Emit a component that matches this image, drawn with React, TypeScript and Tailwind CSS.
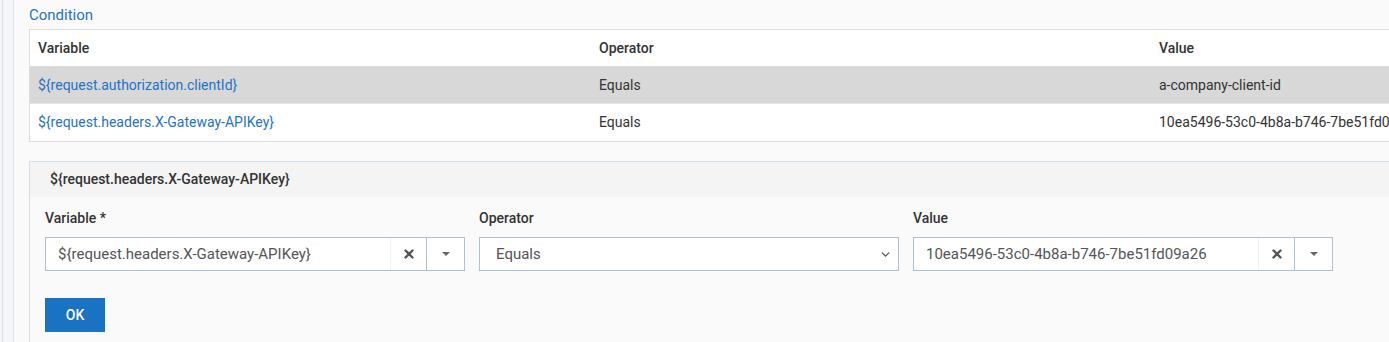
import { ChevronDown } from "lucide-react";

const rows = [
  { variable: "${request.authorization.clientId}", operator: "Equals", value: "a-company-client-id", selected: true },
  { variable: "${request.headers.X-Gateway-APIKey}", operator: "Equals", value: "10ea5496-53c0-4b8a-b746-7be51fd09a26", selected: false },
];

function ComboInput({ value }: { value: string }) {
  return (
    <div className="flex h-[34px] w-[420px] border border-[#aac0d4] bg-white">
      <div className="flex flex-1 items-center pl-[12px] text-[15px] text-[#555]">{value}</div>
      <div className="flex w-[36px] items-center justify-center border-l border-[#f2f2f2] text-[#555]">
        <svg width="10" height="10" viewBox="0 0 10 10">
          <path d="M1.5 1.5 L8.5 8.5 M8.5 1.5 L1.5 8.5" stroke="#555" strokeWidth="2.4" strokeLinecap="round" />
        </svg>
      </div>
      <div className="flex w-[38px] items-center justify-center border-l border-[#aac0d4]">
        <svg width="8" height="4" viewBox="0 0 8 4">
          <path d="M0 0 L8 0 L4 4 Z" fill="#666" />
        </svg>
      </div>
    </div>
  );
}

export default function App() {
  return (
    <div className="flex h-[342px] w-[1389px] overflow-hidden bg-[#fafafa] font-['Roboto',sans-serif]">
      {/* left strip */}
      <div className="w-[14px] shrink-0 border-r border-[#dde3ea] bg-[#f4f6f8]">
        <div className="ml-[2px] h-full w-px bg-[#d6e0ea]" />
      </div>

      <div className="flex-1 pl-[15px]">
        <div className="pt-[5px] text-[15px] leading-[20px] text-[#1f73c4]">Condition</div>

        {/* table */}
        <div className="mt-[4px] w-[1400px] border border-[#dddddd] bg-white text-[14px]">
          <div className="grid h-[37px] grid-cols-[561px_560px_1fr] items-center border-b border-[#dddddd] px-[8px] font-medium text-[#333]">
            <div>Variable</div>
            <div>Operator</div>
            <div>Value</div>
          </div>
          {rows.map((r, i) => (
            <div
              key={i}
              className={`grid h-[37px] grid-cols-[561px_560px_1fr] items-center px-[8px] ${
                r.selected ? "bg-[#d8d8d8]" : "bg-white"
              } ${i < rows.length - 1 ? "border-b border-[#e4e4e4]" : ""}`}
            >
              <div className="text-[#1f73c4]">{r.variable}</div>
              <div className="text-[#333]">{r.operator}</div>
              <div className="whitespace-nowrap text-[#333]">{r.value}</div>
            </div>
          ))}
        </div>

        {/* edit panel */}
        <div className="mt-[19px] w-[1400px] border border-[#d4dee8] bg-[#fafafa]">
          <div className="flex h-[35px] items-center bg-[#f4f4f4] pl-[20px] text-[14px] font-medium text-[#333]">
            ${"{request.headers.X-Gateway-APIKey}"}
          </div>
          <div className="px-[15px] pt-[13px] pb-[12px]">
            <div className="flex gap-[14px]">
              <div className="flex flex-col">
                <div className="mb-[11px] text-[14px] leading-[16px] font-medium text-[#333]">Variable *</div>
                <ComboInput value="${request.headers.X-Gateway-APIKey}" />
              </div>
              <div className="flex flex-col">
                <div className="mb-[11px] text-[14px] leading-[16px] font-medium text-[#333]">Operator</div>
                <div className="flex h-[34px] w-[420px] items-center justify-between border border-[#aac0d4] bg-white pr-[6px] pl-[16px] text-[15px] text-[#555]">
                  <span>Equals</span>
                  <ChevronDown size={13} strokeWidth={2.5} color="#555" />
                </div>
              </div>
              <div className="flex flex-col">
                <div className="mb-[11px] text-[14px] leading-[16px] font-medium text-[#333]">Value</div>
                <ComboInput value="10ea5496-53c0-4b8a-b746-7be51fd09a26" />
              </div>
            </div>
            <button className="mt-[27px] h-[34px] w-[60px] bg-[#1a73c2] text-[14px] font-medium text-white">OK</button>
          </div>
        </div>
      </div>
    </div>
  );
}
